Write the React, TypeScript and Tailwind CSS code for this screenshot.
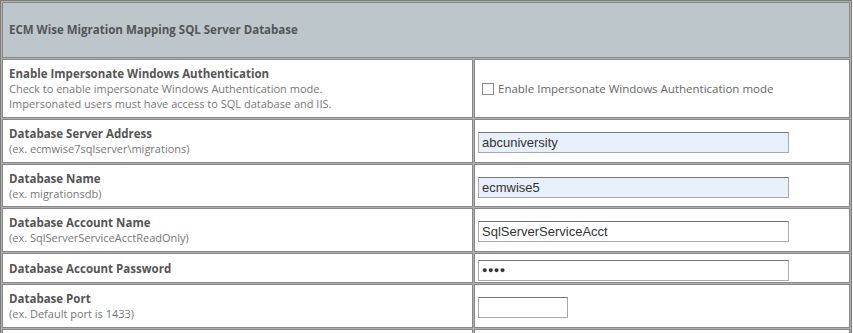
import React from "react";

type Row = {
	label: string;
	hint?: string[];
	height: string;
	field: React.ReactNode;
};

const labelFont = { fontFamily: '"Open Sans", "Noto Sans", sans-serif' };

function TextBox({
	value,
	filled = false,
	width = "w-[311px]",
	size = "text-[13px]",
}: {
	value: string;
	filled?: boolean;
	width?: string;
	size?: string;
}) {
	return (
		<input
			type="text"
			defaultValue={value}
			readOnly
			className={`${width} ${size} h-[21px] px-[3px] text-[#333] outline-none border border-[#a9a9a9] border-t-[#767676] ${
				filled ? "bg-[#e8f0fb]" : "bg-white"
			}`}
			style={{ fontFamily: '"Liberation Sans", Arial, "DejaVu Sans", sans-serif' }}
		/>
	);
}

export default function App() {
	const rows: Row[] = [
		{
			label: "Enable Impersonate Windows Authentication",
			hint: [
				"Check to enable impersonate Windows Authentication mode.",
				"Impersonated users must have access to SQL database and IIS.",
			],
			height: "h-[59px]",
			field: (
				<label className="flex items-center text-[11.5px] text-[#666]" style={labelFont}>
					<span className="ml-[4px] mr-[4px] mt-[1px] h-[12px] w-[12px] border border-[#8a8a8a] bg-white" />
					Enable Impersonate Windows Authentication mode
				</label>
			),
		},
		{
			label: "Database Server Address",
			hint: ["(ex. ecmwise7sqlserver\\migrations)"],
			height: "h-[44px]",
			field: <TextBox value="abcuniversity" filled />,
		},
		{
			label: "Database Name",
			hint: ["(ex. migrationsdb)"],
			height: "h-[43px]",
			field: <TextBox value="ecmwise5" filled />,
		},
		{
			label: "Database Account Name",
			hint: ["(ex. SqlServerServiceAcctReadOnly)"],
			height: "h-[44px]",
			field: <TextBox value="SqlServerServiceAcct" />,
		},
		{
			label: "Database Account Password",
			height: "h-[30px]",
			field: <TextBox value={"\u25CF\u25CF\u25CF\u25CF"} size="text-[9px] tracking-[0.5px]" />,
		},
		{
			label: "Database Port",
			hint: ["(ex. Default port is 1433)"],
			height: "h-[44px]",
			field: <TextBox value="" width="w-[90px]" />,
		},
	];

	return (
		<div className="h-[333px] w-[853px] overflow-hidden bg-white">
			<table className="w-[852px] table-fixed border-separate border-spacing-[1px] border border-[#7d7d7d] bg-[#b0b0b0]">
				<colgroup>
					<col className="w-[471px]" />
					<col />
				</colgroup>
				<tbody>
					<tr>
						<td
							colSpan={2}
							className="h-[56px] border border-[#888] bg-[#bdc6cb] px-[6px] align-middle text-[11.5px] font-bold text-[#555]"
							style={labelFont}
						>
							ECM Wise Migration Mapping SQL Server Database
						</td>
					</tr>
					{rows.map((row) => (
						<tr key={row.label}>
							<td
								className={`${row.height} border border-[#888] bg-white px-[6px] align-middle leading-[15px]`}
								style={labelFont}
							>
								<div className="text-[11.5px] font-bold text-[#555]">{row.label}</div>
								{row.hint?.map((line) => (
									<div key={line} className="text-[11px] text-[#777]">
										{line}
									</div>
								))}
							</td>
							<td className={`${row.height} border border-[#888] bg-white px-[3px] align-middle`}>
								{row.field}
							</td>
						</tr>
					))}
					<tr>
						<td className="h-[40px] border border-[#888] bg-white" />
						<td className="h-[40px] border border-[#888] bg-white" />
					</tr>
				</tbody>
			</table>
		</div>
	);
}
